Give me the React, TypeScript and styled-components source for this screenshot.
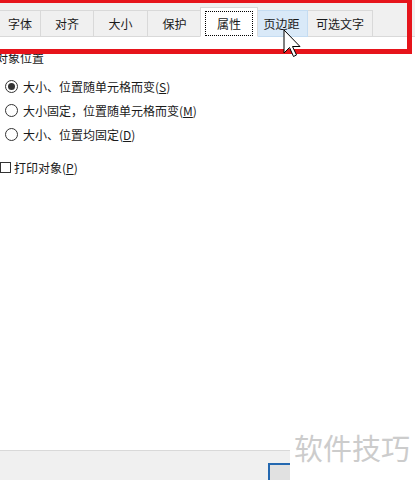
import styled, { createGlobalStyle } from "styled-components";

const GlobalStyle = createGlobalStyle`
  html, body {
    margin: 0;
    padding: 0;
    background: #ffffff;
  }
  body {
    font-family: "Noto Sans CJK SC", "Noto Sans", sans-serif;
    font-size: 12px;
    color: #1a1a1a;
  }
`;

const Page = styled.div`
  position: relative;
  width: 415px;
  height: 480px;
  overflow: hidden;
  display: flex;
  flex-direction: column;
  background: #ffffff;
`;

const TabBar = styled.div`
  height: 37px;
  box-sizing: border-box;
  display: flex;
  align-items: flex-end;
  background: #f0f0f0;
  border-bottom: 1px solid #d9d9d9;
`;

const Tab = styled.div<{ $width: number; $active?: boolean; $hover?: boolean }>`
  box-sizing: border-box;
  width: ${(p) => p.$width}px;
  height: ${(p) => (p.$active ? 30 : 27)}px;
  margin: 0 ${(p) => (p.$active ? -2 : 0)}px -1px;
  display: flex;
  align-items: center;
  justify-content: center;
  border: 1px solid ${(p) => (p.$hover ? "#c4dcf2" : "#d9d9d9")};
  border-left-width: ${(p) => (p.$active ? 1 : 0)}px;
  border-bottom-color: ${(p) => (p.$active ? "#ffffff" : p.$hover ? "#c4dcf2" : "#d9d9d9")};
  background: ${(p) => (p.$active ? "#ffffff" : p.$hover ? "#d9e9f8" : "#f0f0f0")};
  position: relative;
  z-index: ${(p) => (p.$active ? 1 : 0)};
  font-size: 12px;
  color: #1a1a1a;
`;

const FocusBox = styled.span`
  box-sizing: border-box;
  display: flex;
  align-items: center;
  justify-content: center;
  width: 48px;
  height: 25px;
  margin-top: 2px;
  border: 1px dotted #000000;
`;

const Content = styled.div`
  flex: 1;
  display: flex;
  flex-direction: column;
`;

const GroupLabel = styled.div`
  margin: 13px 0 0 -4px;
  line-height: 16px;
  font-size: 12px;
`;

const OptionList = styled.div`
  margin-top: 8px;
  display: flex;
  flex-direction: column;
`;

const OptionRow = styled.div`
  height: 24px;
  display: flex;
  align-items: center;
  gap: 5px;
  padding-left: 5px;
  font-size: 12px;
`;

const Radio = styled.span<{ $checked?: boolean }>`
  box-sizing: border-box;
  width: 13px;
  height: 13px;
  border-radius: 50%;
  border: 1px solid #333333;
  display: flex;
  align-items: center;
  justify-content: center;
  &::after {
    content: "";
    width: 7px;
    height: 7px;
    border-radius: 50%;
    background: ${(p) => (p.$checked ? "#333333" : "transparent")};
  }
`;

const CheckRow = styled.div`
  margin-top: 9px;
  height: 24px;
  display: flex;
  align-items: center;
  gap: 3px;
  font-size: 12px;
`;

const CheckBox = styled.span`
  box-sizing: border-box;
  width: 11px;
  height: 11px;
  border: 1px solid #333333;
  background: #ffffff;
`;

const Key = styled.span`
  text-decoration: underline;
`;

const Footer = styled.div`
  height: 30px;
  box-sizing: border-box;
  border-top: 1px solid #d9d9d9;
  background: #f0f0f0;
  padding: 12px 0 0 268px;
`;

const FooterButton = styled.div`
  box-sizing: border-box;
  width: 75px;
  height: 24px;
  border: 2px solid #2468b0;
  background: #e1e1e1;
`;

const RedFrame = styled.div`
  position: absolute;
  left: -10px;
  top: -2px;
  width: 422px;
  height: 56px;
  box-sizing: border-box;
  border: 5px solid #e6141b;
  pointer-events: none;
  z-index: 5;
`;

const Watermark = styled.div`
  position: absolute;
  left: 290px;
  right: 0;
  top: 430px;
  bottom: 0;
  background: #ffffff;
  padding-left: 4px;
  font-family: "Noto Sans CJK SC", sans-serif;
  font-size: 29px;
  line-height: 34px;
  color: #cccccc;
  z-index: 4;
`;

const Cursor = styled.svg`
  position: absolute;
  left: 283px;
  top: 29px;
  z-index: 6;
`;

const tabs = [
  { label: "字体", width: 41 },
  { label: "对齐", width: 53 },
  { label: "大小", width: 54 },
  { label: "保护", width: 54 },
  { label: "属性", width: 58, active: true },
  { label: "页边距", width: 52, hover: true },
  { label: "可选文字", width: 65 },
];

const options = [
  { text: "大小、位置随单元格而变", key: "S", checked: true },
  { text: "大小固定，位置随单元格而变", key: "M" },
  { text: "大小、位置均固定", key: "D" },
];

export default function App() {
  return (
    <Page>
      <GlobalStyle />
      <TabBar>
        {tabs.map((t) => (
          <Tab key={t.label} $width={t.width} $active={t.active} $hover={t.hover}>
            {t.active ? <FocusBox>{t.label}</FocusBox> : t.label}
          </Tab>
        ))}
      </TabBar>
      <Content>
        <GroupLabel>对象位置</GroupLabel>
        <OptionList>
          {options.map((o) => (
            <OptionRow key={o.key}>
              <Radio $checked={o.checked} />
              <span>
                {o.text}(<Key>{o.key}</Key>)
              </span>
            </OptionRow>
          ))}
        </OptionList>
        <CheckRow>
          <CheckBox />
          <span>
            打印对象(<Key>P</Key>)
          </span>
        </CheckRow>
      </Content>
      <Footer>
        <FooterButton />
      </Footer>
      <RedFrame />
      <Watermark>软件技巧</Watermark>
      <Cursor width="20" height="30" viewBox="0 0 20 30">
        <path
          d="M1 1 L1 24 L6.5 18.5 L10.5 27.5 L13.5 26 L9.5 17.5 L17 17.5 Z"
          fill="#ffffff"
          stroke="#000000"
          strokeWidth="1"
          strokeLinejoin="miter"
        />
      </Cursor>
    </Page>
  );
}
